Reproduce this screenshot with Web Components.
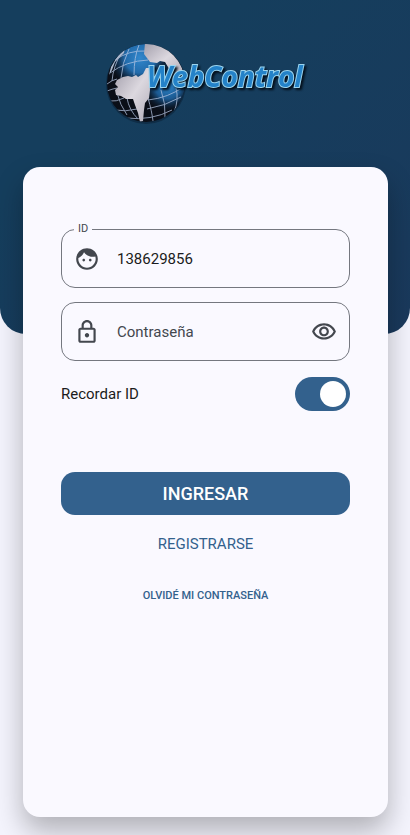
<!DOCTYPE html>
<html lang="es">
<head>
<meta charset="utf-8">
<meta name="viewport" content="width=device-width, initial-scale=1">
<title>WebControl</title>
<style>
  body {
    margin: 0;
    background: #f4f4fd;
    font-family: Roboto, "Liberation Sans", sans-serif;
    color: #1a1c20;
  }
</style>
</head>
<body>
<login-page>
  <brand-logo slot="logo"></brand-logo>
  <login-card>
    <text-field label="ID" value="138629856" icon="face"></text-field>
    <text-field placeholder="Contraseña" type="password" icon="lock" reveal></text-field>
    <toggle-switch>Recordar ID</toggle-switch>
    <login-actions slot="actions"></login-actions>
  </login-card>
</login-page>

<script>
const icons = {
  face: "M9 11.75c-.69 0-1.25.56-1.25 1.25s.56 1.25 1.25 1.25 1.25-.56 1.25-1.25-.56-1.25-1.25-1.25zm6 0c-.69 0-1.25.56-1.25 1.25s.56 1.25 1.25 1.25 1.25-.56 1.25-1.25-.56-1.25-1.25-1.25zM12 2C6.48 2 2 6.48 2 12s4.48 10 10 10 10-4.48 10-10S17.52 2 12 2zm0 18c-4.41 0-8-3.59-8-8 0-.29.02-.58.05-.86 2.36-1.05 4.23-2.98 5.21-5.37C11.07 8.33 14.05 10 17.42 10c.78 0 1.53-.09 2.25-.26.21.71.33 1.47.33 2.26 0 4.41-3.59 8-8 8z",
  lock: "M18 8h-1V6c0-2.76-2.24-5-5-5S7 3.24 7 6v2H6c-1.1 0-2 .9-2 2v10c0 1.1.9 2 2 2h12c1.1 0 2-.9 2-2V10c0-1.1-.9-2-2-2zM9 6c0-1.66 1.34-3 3-3s3 1.34 3 3v2H9V6zm9 14H6V10h12v10zm-6-3c1.1 0 2-.9 2-2s-.9-2-2-2-2 .9-2 2 .9 2 2 2z",
  eye: "M12 6c3.79 0 7.17 2.13 8.82 5.5C19.17 14.87 15.79 17 12 17s-7.17-2.13-8.82-5.5C4.83 8.13 8.21 6 12 6m0-2C7 4 2.73 7.11 1 11.5 2.73 15.89 7 19 12 19s9.27-3.11 11-7.5C21.27 7.11 17 4 12 4zm0 5c1.38 0 2.5 1.12 2.5 2.5S13.38 14 12 14s-2.5-1.12-2.5-2.5S10.62 9 12 9m0-2c-2.48 0-4.5 2.02-4.5 4.5S9.52 16 12 16s4.5-2.02 4.5-4.5S14.48 7 12 7z"
};

function icon(name) {
  return `<svg viewBox="0 0 24 24" width="26" height="26" fill="currentColor" aria-hidden="true"><path d="${icons[name]}"/></svg>`;
}

class LoginPage extends HTMLElement {
  constructor() {
    super();
    this.attachShadow({ mode: "open" }).innerHTML = `
<style>
  :host {
    display: flex;
    flex-direction: column;
    min-height: 100vh;
  }

  header {
    box-sizing: border-box;
    height: 334px;
    padding-top: 40px;
    background: linear-gradient(140deg, #153e5d 30%, #1a395c);
    border-radius: 0 0 26px 26px;
    display: flex;
    justify-content: center;
    align-items: flex-start;
  }

  main {
    flex: 1;
    display: flex;
    flex-direction: column;
    margin: -167px 22px 18px 23px;
  }
</style>
<header><slot name="logo"></slot></header>
<main><slot></slot></main>
`;
  }
}
window.customElements.define("login-page", LoginPage);

class BrandLogo extends HTMLElement {
  constructor() {
    super();
    this.attachShadow({ mode: "open" }).innerHTML = `
<style>
  :host {
    display: block;
  }

  svg {
    display: block;
  }

  text {
    font-family: "Open Sans", "Liberation Sans", sans-serif;
    font-size: 28px;
    font-weight: 700;
    font-style: italic;
    filter: drop-shadow(2px 2px 1px #04101c);
  }
</style>
<svg width="210" height="90" viewBox="100 40 210 90" role="img" aria-label="WebControl">
  <defs>
    <radialGradient id="north" gradientUnits="userSpaceOnUse" cx="140" cy="58" r="30">
      <stop offset="0" stop-color="#3187cc"/>
      <stop offset=".5" stop-color="#226bab"/>
      <stop offset="1" stop-color="#123a62" stop-opacity="0"/>
    </radialGradient>
    <radialGradient id="east" gradientUnits="userSpaceOnUse" cx="168" cy="86" r="26">
      <stop offset="0" stop-color="#2a83c8"/>
      <stop offset=".5" stop-color="#1c5a92"/>
      <stop offset="1" stop-color="#0a1a2c" stop-opacity="0"/>
    </radialGradient>
    <linearGradient id="land" x1="0" y1="0" x2="1" y2="1">
      <stop offset="0" stop-color="#a39fac"/>
      <stop offset=".5" stop-color="#dcd8df"/>
      <stop offset="1" stop-color="#b0acb8"/>
    </linearGradient>
    <clipPath id="globe"><circle cx="146" cy="83" r="39"/></clipPath>
  </defs>
  <circle cx="146" cy="84" r="40" fill="#0b2338" opacity=".6"/>
  <g clip-path="url(#globe)">
    <rect x="106" y="43" width="80" height="80" fill="#0a0e17"/>
    <rect x="106" y="43" width="80" height="80" fill="url(#north)"/>
    <rect x="106" y="43" width="80" height="80" fill="url(#east)"/>
    <g fill="none" stroke="#b5c5e2" stroke-width="1" opacity=".75">
      <path d="M115 60q14 -10 31 -9"/>
      <path d="M110 73q16 -12 38 -13"/>
      <path d="M107 84q5 -4 10 -5"/>
      <path d="M107 91q5 -2 10 -3"/>
      <path d="M109 101q7 1 15 -3"/>
      <path d="M148 100q20 -2 37 -14"/>
      <path d="M115 110q10 2 22 -1M147 109q18 -3 34 -12"/>
      <path d="M126 118q25 3 46 -8"/>
      <path d="M122 51q-9 16 -10 30"/>
      <path d="M129 49q-7 14 -8 29"/>
      <path d="M139 45q-5 12 -5 30"/>
      <path d="M117 93q3 12 10 22"/>
      <path d="M127 98q2 12 11 21"/>
      <path d="M148 98q4 14 5 23"/>
      <path d="M161 90q5 14 4 28"/>
      <path d="M176 88q3 12 -2 24"/>
    </g>
    <path fill="url(#land)" d="M115 84l2 -4 6 -3 5 -1 4 1 4 -2 2 2 5 -3 3 -6h5l-1 22 -1 8 -4 5 -1 7 -1 11 -3 1 -2 -9 -3 -8 -2 -6 -7 0 -5 -3 -5 -1 -1 -5 3 -3z"/>
    <path fill="url(#land)" d="M145 43q18 -1 29 12 9 10 10 22l-12 -3 -4 -7 -3 -5 -5 -1 -3 2 -7 -1 -6 -8z"/>
    <path fill="#a9b6cc" d="M125 48l-8 9 -6 10 -2 8 3 -5 3 -8 9 -9z"/>
  </g>
  <text x="147" y="87" fill="#2482c8" stroke="#9bd4ee" stroke-width="2" paint-order="stroke">WebControl</text>
</svg>
`;
  }
}
window.customElements.define("brand-logo", BrandLogo);

class LoginCard extends HTMLElement {
  constructor() {
    super();
    this.attachShadow({ mode: "open" }).innerHTML = `
<style>
  :host {
    display: block;
    flex: 1;
    padding: 62px 38px 24px;
    background: #faf9ff;
    border-radius: 17px;
    box-shadow: 0 14px 28px rgba(0, 0, 0, 0.28);
  }

  .fields {
    display: flex;
    flex-direction: column;
    gap: 14px;
  }

  .actions {
    margin-top: 61px;
  }
</style>
<div class="fields"><slot></slot></div>
<div class="actions"><slot name="actions"></slot></div>
`;
  }
}
window.customElements.define("login-card", LoginCard);

class TextField extends HTMLElement {
  constructor() {
    super();
    const label = this.getAttribute("label");
    const placeholder = this.getAttribute("placeholder") || "";
    this.attachShadow({ mode: "open" }).innerHTML = `
<style>
  :host {
    display: block;
    color: #43474e;
  }

  fieldset {
    margin: 0;
    min-width: 0;
    padding: 0 12px;
    border: 1px solid #74777f;
    border-radius: 14px;
  }

  /* the legend rises half its height above the border */
  fieldset.labelled {
    margin-top: -7px;
    padding-bottom: 6px;
  }

  legend {
    height: 14px;
    padding: 0 4px;
    font-size: 11px;
    line-height: 14px;
  }

  .row {
    display: flex;
    align-items: center;
    height: 57px;
  }

  .labelled .row {
    height: 45px;
  }

  svg {
    display: block;
    flex: none;
  }

  input {
    flex: 1;
    min-width: 0;
    margin: 0 12px 0 17px;
    padding: 0;
    border: 0;
    outline: 0;
    background: none;
    font: inherit;
    font-size: 15px;
    line-height: 24px;
    color: #1a1c20;
  }

  input::placeholder {
    color: #43474e;
    opacity: 1;
  }

  button {
    padding: 0;
    border: 0;
    background: none;
    color: inherit;
    cursor: pointer;
  }
</style>
<fieldset class="${label ? "labelled" : ""}">
  ${label ? `<legend><label for="input">${label}</label></legend>` : ""}
  <div class="row">
    ${icon(this.getAttribute("icon"))}
    <input id="input" type="${this.getAttribute("type") || "text"}" value="${this.getAttribute("value") || ""}"
      placeholder="${placeholder}" ${label ? "" : `aria-label="${placeholder}"`}>
    ${this.hasAttribute("reveal") ? `<button type="button" aria-label="Mostrar contraseña">${icon("eye")}</button>` : ""}
  </div>
</fieldset>
`;
  }

  connectedCallback() {
    const button = this.shadowRoot.querySelector("button");
    if (button) button.onclick = () => this.toggleReveal();
  }

  toggleReveal() {
    const input = this.shadowRoot.querySelector("#input");
    input.type = input.type === "password" ? "text" : "password";
  }
}
window.customElements.define("text-field", TextField);

class ToggleSwitch extends HTMLElement {
  constructor() {
    super();
    this.attachShadow({ mode: "open" }).innerHTML = `
<style>
  :host {
    display: block;
    padding-top: 2px;
  }

  label {
    display: flex;
    align-items: center;
    justify-content: space-between;
    font-size: 15px;
    line-height: 24px;
  }

  input {
    appearance: none;
    box-sizing: border-box;
    display: flex;
    align-items: center;
    width: 55px;
    height: 34px;
    margin: 0;
    padding: 0 4px;
    border-radius: 17px;
    background: #c3c6cf;
    cursor: pointer;
  }

  input::before {
    content: "";
    width: 26px;
    height: 26px;
    border-radius: 50%;
    background: #fff;
  }

  input:checked {
    justify-content: flex-end;
    background: #33618d;
  }
</style>
<label for="toggle"><slot></slot><input id="toggle" type="checkbox" role="switch" checked></label>
`;
  }
}
window.customElements.define("toggle-switch", ToggleSwitch);

class LoginActions extends HTMLElement {
  constructor() {
    super();
    this.attachShadow({ mode: "open" }).innerHTML = `
<style>
  :host {
    display: flex;
    flex-direction: column;
    align-items: center;
  }

  button {
    border: 0;
    background: none;
    font: inherit;
    color: #33618d;
    cursor: pointer;
  }

  .primary {
    width: 100%;
    height: 43px;
    border-radius: 14px;
    background: #33618d;
    color: #fff;
    font-size: 18px;
    font-weight: 500;
  }

  .register {
    height: 40px;
    margin-top: 9px;
    font-size: 15px;
  }

  .forgot {
    height: 40px;
    margin-top: 11px;
    font-size: 11px;
    font-weight: 500;
  }
</style>
<button class="primary" type="button">INGRESAR</button>
<button class="register" type="button">REGISTRARSE</button>
<button class="forgot" type="button">OLVIDÉ MI CONTRASEÑA</button>
`;
  }
}
window.customElements.define("login-actions", LoginActions);
</script>
</body>
</html>
